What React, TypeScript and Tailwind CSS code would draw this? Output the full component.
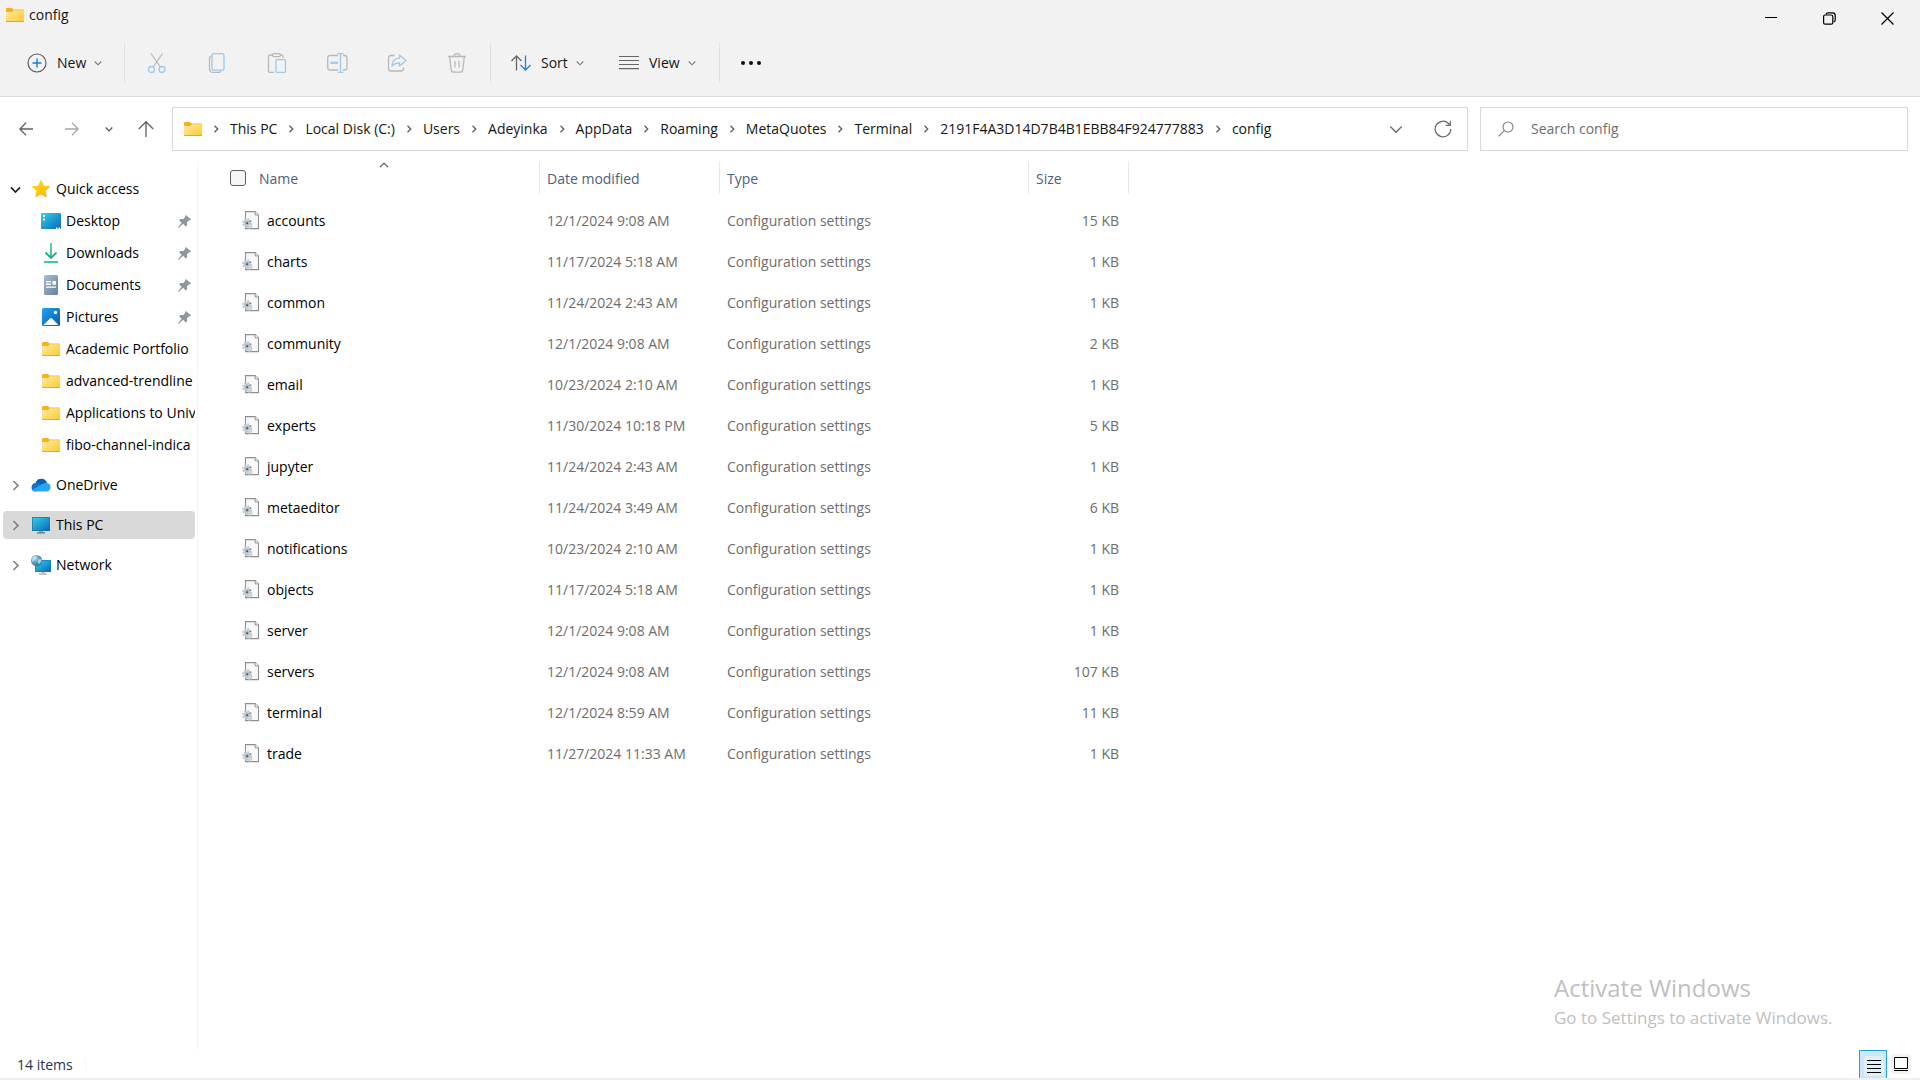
import React from 'react';

const files: [string, string, string][] = [
  ['accounts', '12/1/2024 9:08 AM', '15 KB'],
  ['charts', '11/17/2024 5:18 AM', '1 KB'],
  ['common', '11/24/2024 2:43 AM', '1 KB'],
  ['community', '12/1/2024 9:08 AM', '2 KB'],
  ['email', '10/23/2024 2:10 AM', '1 KB'],
  ['experts', '11/30/2024 10:18 PM', '5 KB'],
  ['jupyter', '11/24/2024 2:43 AM', '1 KB'],
  ['metaeditor', '11/24/2024 3:49 AM', '6 KB'],
  ['notifications', '10/23/2024 2:10 AM', '1 KB'],
  ['objects', '11/17/2024 5:18 AM', '1 KB'],
  ['server', '12/1/2024 9:08 AM', '1 KB'],
  ['servers', '12/1/2024 9:08 AM', '107 KB'],
  ['terminal', '12/1/2024 8:59 AM', '11 KB'],
  ['trade', '11/27/2024 11:33 AM', '1 KB'],
];

const crumbs = [
  'This PC', 'Local Disk (C:)', 'Users', 'Adeyinka', 'AppData', 'Roaming',
  'MetaQuotes', 'Terminal', '2191F4A3D14D7B4B1EBB84F924777883', 'config',
];

function Gradients() {
  return (
    <svg width="0" height="0" className="absolute" aria-hidden="true">
      <defs>
        <linearGradient id="folder" x1="0" y1="0" x2="1" y2="1">
          <stop offset="0" stopColor="#ffe9a0" />
          <stop offset="1" stopColor="#ffc934" />
        </linearGradient>
        <linearGradient id="screen" x1="0" y1="0" x2="1" y2="1">
          <stop offset="0" stopColor="#2fd3e0" />
          <stop offset="1" stopColor="#0b67c0" />
        </linearGradient>
        <linearGradient id="down" x1="0" y1="0" x2="0" y2="1">
          <stop offset="0" stopColor="#35cf84" />
          <stop offset="1" stopColor="#10a391" />
        </linearGradient>
        <linearGradient id="doc" x1="0" y1="0" x2="1" y2="1">
          <stop offset="0" stopColor="#a9bdd0" />
          <stop offset="1" stopColor="#647f9e" />
        </linearGradient>
        <linearGradient id="pic" x1="0" y1="0" x2="1" y2="1">
          <stop offset="0" stopColor="#1fa4ea" />
          <stop offset="1" stopColor="#0a5bb3" />
        </linearGradient>
        <linearGradient id="star" x1="0" y1="0" x2="1" y2="1">
          <stop offset="0" stopColor="#ffdb12" />
          <stop offset="1" stopColor="#fdb10e" />
        </linearGradient>
        <radialGradient id="globe" cx="0.35" cy="0.3" r="0.8">
          <stop offset="0" stopColor="#b6dcee" />
          <stop offset="0.5" stopColor="#5b9cc0" />
          <stop offset="1" stopColor="#2a6590" />
        </radialGradient>
      </defs>
    </svg>
  );
}

const Folder = () => (
  <svg width="18" height="14" viewBox="0 0 18 14" className="shrink-0">
    <path d="M0 1q0-1 1-1h5l1.500 1.500h9.500q1 0 1 1V5H0z" fill="#f5b21a" />
    <path d="M0 4h6l2-1.700h10V14H0z" fill="url(#folder)" />
    <path d="M0 13h18v.5q0 .5-.5.5H.5Q0 14 0 13.500z" fill="#e8a520" />
  </svg>
);

function Chevron({ dir, size = 8, color = '#5c5c5c', w = 1.3 }: { dir: 'down' | 'right' | 'up'; size?: number; color?: string; w?: number }) {
  const d = dir === 'down' ? 'M0.700 2.500L4 5.800l3.300-3.300' : dir === 'up' ? 'M0.700 5.800L4 2.500l3.300 3.300' : 'M2.500 0.700L5.800 4 2.500 7.300';
  return (
    <svg width={size} height={size} viewBox="0 0 8 8" fill="none" stroke={color} strokeWidth={w} className="shrink-0">
      <path d={d} />
    </svg>
  );
}

const Pin = () => (
  <svg width="13" height="13" viewBox="0 0 13 13" fill="#8d99a1" className="mr-1 shrink-0">
    <path d="M8 0l5 4.500-1 1-1-.2-2 2.200.2 2.700-1.400 1.200-2.700-2.600L.8 13 0 12.400l3.600-4.600L1 5.200 2.300 4l2.900.1 2.200-2.300L7.200.8z" />
  </svg>
);

const StarIcon = () => (
  <svg width="18" height="18" viewBox="0 0 18 18" className="shrink-0">
    <path d="M9 .6l2.500 5.500 6 .7-4.500 4 1.200 6L9 13.900l-5.200 2.900 1.200-6-4.500-4 6-.7z" fill="url(#star)" stroke="url(#star)" strokeLinejoin="round" />
  </svg>
);
const DesktopIcon = () => (
  <svg width="20" height="16" viewBox="0 0 20 16">
    <rect width="20" height="16" rx="1" fill="url(#screen)" />
    <path d="M2 2h2v2H2zM2 5.500h2v2H2z" fill="#fff" />
    <path d="M15 14.500h1.500V16H15zM17.500 14.500H19V16h-1.500z" fill="#fff" />
  </svg>
);
const DownIcon = () => (
  <svg width="14" height="20" viewBox="0 0 14 20" fill="none" strokeWidth="1.800">
    <path d="M6.200 0h1.600v15H6.200z" stroke="none" fill="url(#down)" />
    <path d="M1.500 9.500L7 15l5.500-5.500" stroke="#17ae90" />
    <path d="M0 19h14" stroke="#2cc28d" />
  </svg>
);
const DocIcon = () => (
  <svg width="14" height="20" viewBox="0 0 14 20">
    <rect width="14" height="20" rx="1.500" fill="url(#doc)" />
    <path d="M2 6h5v1.300H2zM2 8.600h5v1.300H2zM2 11.500h10v1.300H2zM8.500 6H12v3.800H8.500z" fill="#fff" />
  </svg>
);
const PicIcon = () => (
  <svg width="18" height="18" viewBox="0 0 18 18">
    <rect width="18" height="18" rx="1.500" fill="url(#pic)" />
    <path d="M1.500 17L8 10.400q1-1 2 0L16.500 17z" fill="#fff" />
    <circle cx="13.500" cy="4.500" r="1.700" fill="#fff" />
  </svg>
);
const CloudIcon = () => (
  <svg width="20" height="14" viewBox="0 0 20 14" className="shrink-0">
    <path d="M4.500 5A6 6 0 0 1 16 5l-5 4z" fill="#0a5fb8" />
    <path d="M4 13.500A4.300 4.300 0 0 1 4.500 5q2-.7 4.500.9l6 4.100z" fill="#0f73cf" />
    <path d="M9 7.500q2.500-3 7-2.500a4.300 4.300 0 0 1-.5 8.500H4q-2 0-3-1.500z" fill="#28a8ea" />
  </svg>
);
const PcIcon = () => (
  <svg width="18" height="17" viewBox="0 0 18 17" className="shrink-0">
    <rect width="18" height="14" rx=".6" fill="#1875ad" />
    <rect x=".7" y=".7" width="16.600" height="12.600" fill="url(#screen)" />
    <path d="M7 14h4v1.500H7z" fill="#9aa3a8" />
    <path d="M5 15.300h8v1.200H5z" fill="#5f6a70" />
  </svg>
);
const NetIcon = () => (
  <svg width="20" height="20" viewBox="0 0 20 20" className="shrink-0">
    <rect x="4" y="5" width="16" height="12" rx=".6" fill="#1875ad" />
    <rect x="4.700" y="5.700" width="14.600" height="10.600" fill="url(#screen)" />
    <path d="M10.500 17h3v1.500h-3z" fill="#b5bcc0" />
    <path d="M8 18.500h8v1.200H8z" fill="#9ba4a9" />
    <circle cx="5.500" cy="5.500" r="5.500" fill="url(#globe)" />
    <path d="M2 2.500q2-1.500 4-1L5 4 3 4.500 2 7 .8 5.500zM7 4.500l3-.5.5 2-2 3-1.500-1z" fill="#d3ecf5" opacity=".7" />
  </svg>
);

const FileIcon = () => (
  <svg width="18" height="20" viewBox="0 0 18 20" className="shrink-0">
    <path d="M3.500.6h9.700l3.300 3.300v13.700h-13z" fill="#f8f8f8" stroke="#8f8f8f" strokeWidth="1.100" />
    <path d="M13.200.6v3.300h3.300" fill="#fff" stroke="#8f8f8f" />
    <circle cx="5" cy="12" r="3.700" fill="#cdd6dc" />
    <circle cx="5" cy="12" r="4.200" fill="none" stroke="#b4bfc7" strokeWidth="1.400" strokeDasharray="1.700 1.600" />
    <circle cx="7.500" cy="15" r="2.400" fill="#cfd8de" stroke="#b4bfc7" strokeDasharray="1.200 .8" />
    <circle cx="5" cy="12" r="1.900" fill="#e6ebee" stroke="#929da5" strokeWidth=".8" />
    <path d="M4.300 11.200h1.600v1.700H4.300z" fill="#333b40" />
    <path d="M6.800 9.800h2V11z" fill="#4a545a" />
  </svg>
);

const G = '#b9b9b9';
const B = '#9cc9ec';
const actions: { name: string; icon: React.ReactNode }[] = [
  {
    name: 'Cut',
    icon: (
      <>
        <path d="M4 0.500L13.300 14M15.500 0.500L6.200 14" stroke={G} />
        <circle cx="4.500" cy="16.500" r="3" stroke={B} />
        <circle cx="15" cy="16.500" r="3" stroke={B} />
      </>
    ),
  },
  {
    name: 'Copy',
    icon: (
      <>
        <path d="M4.500 3Q2.500 3.500 2.500 6v9.500q0 4 4 4H11q2.300 0 2.800-1.500" stroke={G} />
        <rect x="5" y="0.700" width="12" height="16.500" rx="2" stroke={B} />
      </>
    ),
  },
  {
    name: 'Paste',
    icon: (
      <>
        <path d="M6 2H3q-1.500 0-1.500 1.500V18q0 1.500 1.500 1.500h4M13 2h1.500Q16 2 16 3.500V5" stroke={G} />
        <rect x="5.500" y="0.600" width="8" height="3" rx="1.500" stroke={G} />
        <rect x="9" y="6.600" width="9.500" height="12.900" rx="1.500" stroke={B} />
      </>
    ),
  },
  {
    name: 'Rename',
    icon: (
      <>
        <path d="M11 2.500H3Q.7 2.500.7 5v9.500Q.7 17 3 17h8M16 2.500h1.500Q20 2.500 20 5v9.500Q20 17 17.500 17H16" stroke={G} />
        <path d="M10.500.7h6M13.500.7v18.600M10.500 19.300h6" stroke={B} />
        <path d="M3.500 9.800h7.500" stroke={B} strokeWidth="2.200" />
      </>
    ),
  },
  {
    name: 'Share',
    icon: (
      <>
        <path d="M7.500 2.500H4Q1.500 2.500 1.500 5v10.500Q1.500 18 4 18h10q2.500 0 2.500-2.500v-1" stroke={G} />
        <path d="M12.500 2l6.500 5.500-6.500 5.500V9.800Q8 9.800 5 13q.5-7.500 7.500-7.800z" stroke={B} strokeLinejoin="round" />
      </>
    ),
  },
  {
    name: 'Delete',
    icon: (
      <path d="M1 3.500h18M7 3.500Q7 .7 10 .7t3 2.800M2.700 3.500l1.500 13.700q.3 2 2.200 2h7.200q1.900 0 2.200-2l1.500-13.700M8 8v6.500M12 8v6.500" stroke={G} />
    ),
  },
];

function SideItem({ label, icon, pinned }: { label: string; icon: React.ReactNode; pinned?: boolean }) {
  return (
    <li>
      <a href="#" className="flex h-8 items-center overflow-hidden pl-10">
        <span className="flex w-[26px] shrink-0 items-center">
          <span className="flex w-[22px] justify-center">{icon}</span>
        </span>
        <span className="min-w-0 flex-1 overflow-hidden whitespace-nowrap">{label}</span>
        {pinned && <Pin />}
      </a>
    </li>
  );
}

function RootItem({ label, icon, open, selected }: { label: string; icon: React.ReactNode; open?: boolean; selected?: boolean }) {
  return (
    <a href="#" className={selected ? 'flex h-7 items-center rounded-sm bg-[#d9d9d9] pl-[7px]' : 'flex h-7 items-center pl-[7px]'}>
      <span className="flex w-5 items-center">
        {open ? <Chevron dir="down" size={11} color="#222" w={1.2} /> : <Chevron dir="right" size={11} color="#808080" w={1.2} />}
      </span>
      <span className="mr-1 flex w-[22px] justify-center">{icon}</span>
      <span>{label}</span>
    </a>
  );
}

export default function App() {
  return (
    <div className="flex min-h-screen flex-col bg-white font-['Open_Sans','Noto_Sans',sans-serif] text-sm text-[#151515]">
      <Gradients />
      <header className="border-b border-[#dcdcdc] bg-[#f2f2f2]">
        <div className="flex h-9 items-start justify-between">
          <h1 className="flex items-center gap-[5px] pl-1.5 pt-[5px] leading-5">
            <Folder />
            config
          </h1>
          <div className="flex pr-1 text-black">
            <button aria-label="Minimize" className="flex h-9 w-[58px] items-center justify-center">
              <svg width="12" height="12" viewBox="0 0 12 12"><path d="M0 5h12v1H0z" /></svg>
            </button>
            <button aria-label="Restore" className="flex h-9 w-[58px] items-center justify-center">
              <svg width="13" height="13" viewBox="0 0 13 13" fill="none" stroke="#000" strokeWidth="1.200">
                <rect x=".6" y="3" width="9.200" height="9.200" rx="1.500" />
                <path d="M3 2.500Q3.300.8 5 .8h4.500q2.700 0 2.700 2.700V8q0 1.700-1.700 2" />
              </svg>
            </button>
            <button aria-label="Close" className="flex h-9 w-[58px] items-center justify-center">
              <svg width="13" height="13" viewBox="0 0 13 13" stroke="#000" strokeWidth="1.200"><path d="M.5.5l12 12M12.500.5l-12 12" /></svg>
            </button>
          </div>
        </div>
        <div className="flex h-[60px] items-center pb-1.5">
          <button className="flex w-[124px] items-center pl-[27px]">
            <svg width="20" height="20" viewBox="0 0 20 20" fill="none" className="mr-2.5">
              <circle cx="10" cy="10" r="9" stroke="#5c5c5c" strokeWidth="1.200" />
              <path d="M10 5.500v9M5.500 10h9" stroke="#1283d8" strokeWidth="1.400" />
            </svg>
            <span className="mr-2">New</span>
            <Chevron dir="down" color="#777" w={1.1} />
          </button>
          <div className="mr-0.5 h-10 w-px bg-[#e0e0e0]" />
          {actions.map((a) => (
            <button key={a.name} aria-label={a.name} disabled className="flex w-[60px] items-center justify-center">
              <svg width="21" height="20" viewBox="0 0 21 20" fill="none" strokeWidth="1.300">{a.icon}</svg>
            </button>
          ))}
          <div className="ml-[3px] h-10 w-px bg-[#e0e0e0]" />
          <button className="flex w-[108px] items-center pl-5">
            <svg width="20" height="16" viewBox="0 0 20 16" fill="none" strokeWidth="1.300" className="mr-2.5">
              <path d="M5.500 15.500V1M.5 6l5-5 5 5" stroke="#666" />
              <path d="M14.500.5V15M9.500 10l5 5 5-5" stroke="#1a86d9" />
            </svg>
            <span className="mr-2">Sort</span>
            <Chevron dir="down" color="#777" w={1.1} />
          </button>
          <button className="flex w-[120px] items-center pl-5">
            <svg width="20" height="14" viewBox="0 0 20 14" className="mr-2.5" fill="#666">
              <path d="M0 0h20v1H0zM0 4h20v1H0zM0 8h20v1H0zM0 12h20v1.300H0z" />
            </svg>
            <span className="mr-2">View</span>
            <Chevron dir="down" color="#777" w={1.1} />
          </button>
          <div className="h-10 w-px bg-[#e0e0e0]" />
          <button aria-label="See more" className="flex w-[62px] items-center justify-center">
            <svg width="20" height="4" viewBox="0 0 20 4" fill="#111">
              <circle cx="2" cy="2" r="2" /><circle cx="10" cy="2" r="2" /><circle cx="18" cy="2" r="2" />
            </svg>
          </button>
        </div>
      </header>

      <div className="flex items-center pb-[11px] pr-3 pt-2.5">
        <nav className="flex w-[172px] shrink-0 items-center" aria-label="History">
          <button aria-label="Back" className="flex w-[52px] justify-center">
            <svg width="14" height="14" viewBox="0 0 14 14" fill="none" stroke="#5f5f5f" strokeWidth="1.300"><path d="M14 7H.8M7 .8L.8 7 7 13.200" /></svg>
          </button>
          <button aria-label="Forward" disabled className="flex w-10 justify-center">
            <svg width="14" height="14" viewBox="0 0 14 14" fill="none" stroke="#a5a5a5" strokeWidth="1.300"><path d="M0 7h13.200M7 .8L13.200 7 7 13.200" /></svg>
          </button>
          <button aria-label="Recent locations" className="flex w-[34px] justify-center">
            <Chevron dir="down" color="#555" w={1.2} />
          </button>
          <button aria-label="Up" className="flex w-10 justify-center">
            <svg width="16" height="16" viewBox="0 0 16 16" fill="none" stroke="#5f5f5f" strokeWidth="1.300"><path d="M8 16V.8M.8 8L8 .8 15.200 8" /></svg>
          </button>
        </nav>
        <div className="mr-3 flex h-11 flex-1 items-center border border-[#d9d9d9] pl-[11px]">
          <Folder />
          <ol className="flex flex-1 whitespace-nowrap">
            {crumbs.map((c) => (
              <li key={c} className="flex items-center">
                <span className="flex w-7 justify-center"><Chevron dir="right" /></span>
                <a href="#">{c}</a>
              </li>
            ))}
          </ol>
          <button aria-label="Previous locations" className="flex w-[46px] justify-center"><Chevron dir="down" size={14} color="#666" w={0.8} /></button>
          <button aria-label="Refresh" className="flex w-12 justify-center">
            <svg width="18" height="18" viewBox="0 0 18 18" fill="none" stroke="#6a6a6a" strokeWidth="1.200">
              <path d="M16.800 9A7.800 7.800 0 1 1 14.500 3.500l1.500 1.500M16.300.8V5.300h-4.500" />
            </svg>
          </button>
        </div>
        <label className="flex h-11 w-[428px] items-center border border-[#d9d9d9] pl-[17px]">
          <svg width="16" height="16" viewBox="0 0 16 16" fill="none" stroke="#808080" strokeWidth="1.100">
            <circle cx="10" cy="6" r="5" /><path d="M6.300 9.700L.6 15.400" />
          </svg>
          <input aria-label="Search config" placeholder="Search config" className="ml-[17px] min-w-0 flex-1 outline-none placeholder:text-[#6d6d6d]" />
        </label>
      </div>

      <div className="flex flex-1">
        <aside className="w-[198px] shrink-0 border-r border-[#f3f3f3] pl-[3px] pr-0.5 pt-[13px] text-black">
          <RootItem label="Quick access" open icon={<StarIcon />} />
          <ul className="-ml-[3px] mb-2.5 mt-0.5">
            <SideItem label="Desktop" pinned icon={<DesktopIcon />} />
            <SideItem label="Downloads" pinned icon={<DownIcon />} />
            <SideItem label="Documents" pinned icon={<DocIcon />} />
            <SideItem label="Pictures" pinned icon={<PicIcon />} />
            <SideItem label="Academic Portfolio" icon={<Folder />} />
            <SideItem label="advanced-trendline" icon={<Folder />} />
            <SideItem label="Applications to Univ" icon={<Folder />} />
            <SideItem label="fibo-channel-indica" icon={<Folder />} />
          </ul>
          <div className="flex flex-col gap-3">
            <RootItem label="OneDrive" icon={<CloudIcon />} />
            <RootItem label="This PC" selected icon={<PcIcon />} />
            <RootItem label="Network" icon={<NetIcon />} />
          </div>
        </aside>
        <main className="relative flex-1">
          <table className="w-[931px] table-fixed border-collapse text-left text-[#6d6d6d]">
            <thead className="text-[#4c607a]">
              <tr className="h-[38px] align-top">
                <th className="w-[342px] p-0 font-normal">
                  <div className="relative flex h-8 items-center border-r border-[#e5e5e5] pl-8 pt-0.5">
                    <span className="absolute -top-0.5 left-[181px]"><Chevron dir="up" size={10} color="#666" w={0.9} /></span>
                    <input type="checkbox" aria-label="Select all" className="mb-0.5 mr-[13px] size-4 appearance-none rounded-[3px] border border-[#5f5f5f] bg-[#f5f5f5]" />
                    Name
                  </div>
                </th>
                <th className="w-[180px] p-0 font-normal"><div className="flex h-8 items-center border-r border-[#e5e5e5] pl-[7px] pt-0.5">Date modified</div></th>
                <th className="w-[309px] p-0 font-normal"><div className="flex h-8 items-center border-r border-[#e5e5e5] pl-[7px] pt-0.5">Type</div></th>
                <th className="w-[100px] p-0 font-normal"><div className="flex h-8 items-center border-r border-[#e5e5e5] pl-[7px] pt-0.5">Size</div></th>
              </tr>
            </thead>
            <tbody>
              {files.map(([name, date, size]) => (
                <tr key={name} className="h-[41px]">
                  <td className="p-0 text-black">
                    <div className="flex items-center gap-[7px] pl-11"><FileIcon />{name}</div>
                  </td>
                  <td className="p-0 pl-[7px]">{date}</td>
                  <td className="p-0 pl-[7px]">Configuration settings</td>
                  <td className="p-0 pr-[10px] text-right">{size}</td>
                </tr>
              ))}
            </tbody>
          </table>
          <div className="absolute bottom-[18px] right-[82px] w-[284px] whitespace-nowrap text-[#c0c0c0]">
            <p className="text-2xl leading-8">Activate Windows</p>
            <p className="text-[17px] leading-7">Go to Settings to activate Windows.</p>
          </div>
        </main>
      </div>

      <footer className="flex items-end justify-between border-b-2 border-[#efefef] pr-[9px]">
        <div className="flex h-7 items-center pl-[17px] pt-0.5 text-[#1e3358]">
          <span className="mr-3">14 items</span>
          <span className="h-3 w-px bg-[#f5f5f5]" />
        </div>
        <div className="flex h-7 gap-1">
          <button aria-label="Details view" className="flex w-7 items-center justify-end border border-b-0 border-[#26a0da] bg-[#cce8f6] pr-0.5">
            <svg width="20" height="20" viewBox="0 0 20 20" className="mt-0.5">
              <rect width="20" height="20" rx="3" fill="#dff0f7" />
              <path d="M3 4h14v1H3zM3 8h14v1H3zM3 12h14v1H3zM3 16h14v1H3z" />
            </svg>
          </button>
          <button aria-label="Large icons view" className="flex w-5 items-center justify-center">
            <svg width="20" height="20" viewBox="0 0 20 20">
              <rect width="20" height="20" rx="3" fill="#f3f3f3" />
              <path d="M3.500 3.500h13v11h-13z" fill="#fff" stroke="#000" />
              <path d="M3 16h14v1H3z" />
            </svg>
          </button>
        </div>
      </footer>
    </div>
  );
}
